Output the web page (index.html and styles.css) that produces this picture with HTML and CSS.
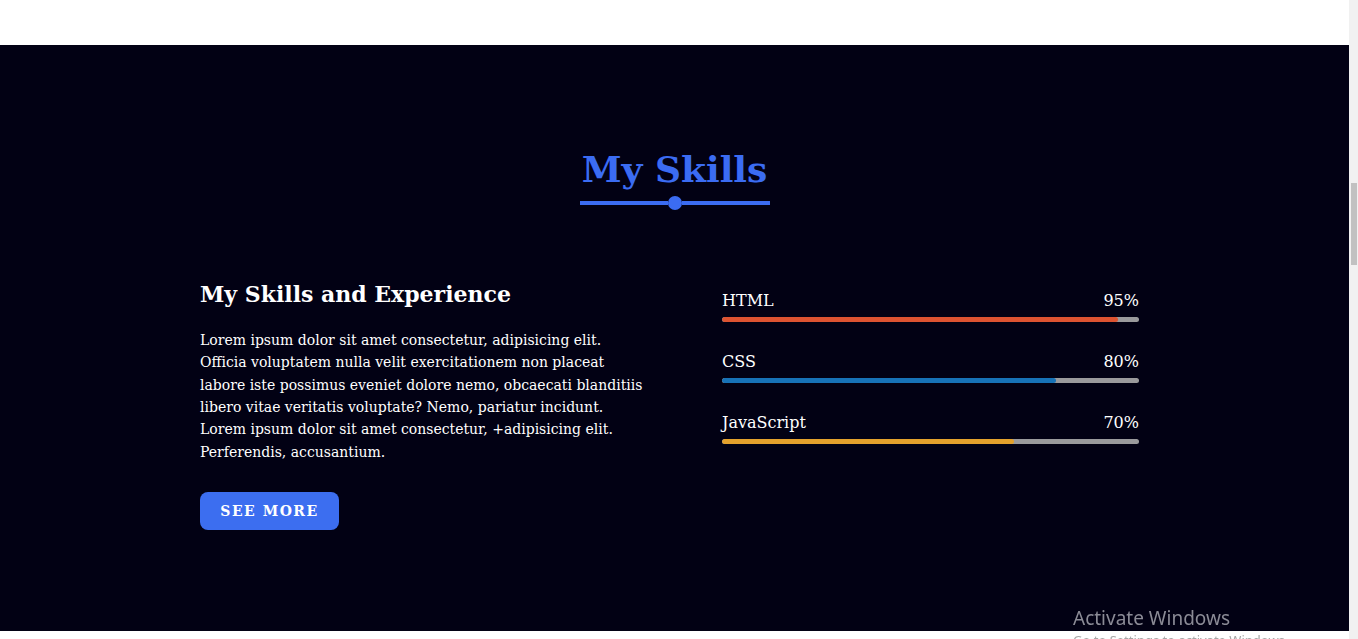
FILE: index.html
```html
<!DOCTYPE html>
<html lang="en">
<head>
<meta charset="utf-8">
<title>My Skills</title>
<link rel="stylesheet" href="styles.css">
</head>
<body>
<div class="window">
  <div class="page">
    <header class="topbar"></header>
    <section class="skills">
      <h2 class="section-title">My Skills</h2>
      <div class="divider"><span class="divider-line"></span><span class="divider-dot"></span><span class="divider-line"></span></div>
      <div class="skills-row">
        <div class="skills-text">
          <h3 class="skills-heading">My Skills and Experience</h3>
          <p class="skills-para">Lorem ipsum dolor sit amet consectetur, adipisicing elit. Officia voluptatem nulla velit exercitationem non placeat labore iste possimus eveniet dolore nemo, obcaecati blanditiis libero vitae veritatis voluptate? Nemo, pariatur incidunt. Lorem ipsum dolor sit amet consectetur, +adipisicing elit. Perferendis, accusantium.</p>
          <a class="btn" href="#">See More</a>
        </div>
        <div class="skills-bars">
          <div class="skill">
            <div class="skill-head"><span>HTML</span><span>95%</span></div>
            <div class="bar"><div class="bar-fill fill-html" style="width:95%"></div></div>
          </div>
          <div class="skill">
            <div class="skill-head"><span>CSS</span><span>80%</span></div>
            <div class="bar"><div class="bar-fill fill-css" style="width:80%"></div></div>
          </div>
          <div class="skill">
            <div class="skill-head"><span>JavaScript</span><span>70%</span></div>
            <div class="bar"><div class="bar-fill fill-js" style="width:70%"></div></div>
          </div>
        </div>
      </div>
    </section>
    <section class="next"></section>
  </div>
  <div class="scrollbar"><div class="scroll-thumb"></div></div>
</div>
<div class="watermark">
  <div class="wm-title">Activate Windows</div>
  <div class="wm-sub">Go to Settings to activate Windows.</div>
</div>
</body>
</html>
```

FILE: styles.css
```css
* { box-sizing: border-box; }
html, body {
  margin: 0;
  padding: 0;
  height: 639px;
  overflow: hidden;
  background: #fff;
}
body {
  font-family: "DejaVu Serif", "Liberation Serif", serif;
  color: #fff;
}
.window {
  display: flex;
  height: 639px;
}
.page {
  flex: 1;
  min-width: 0;
  background: #fff;
}
.topbar {
  height: 45px;
  background: #fff;
}
.skills {
  height: 586px;
  background: #020114;
  padding-top: 103px;
}
.section-title {
  margin: 0;
  text-align: center;
  font-size: 36px;
  line-height: 43.2px;
  font-weight: bold;
  color: #3b6cf2;
}
.divider {
  display: flex;
  align-items: center;
  justify-content: center;
  height: 14px;
  margin-top: 5px;
}
.divider-line {
  width: 88px;
  height: 4px;
  background: #3b6cf2;
}
.divider-dot {
  width: 14px;
  height: 14px;
  border-radius: 50%;
  background: #3b6cf2;
}
.skills-row {
  width: 949px;
  margin: 71px auto 0;
  display: grid;
  grid-template-columns: 448px 417px;
  column-gap: 74px;
  align-items: start;
}
.skills-heading {
  margin: 0;
  font-size: 22px;
  line-height: 27.6px;
  font-weight: bold;
}
.skills-para {
  margin: 20px 0 0;
  font-size: 14px;
  line-height: 22.4px;
}
.btn {
  margin-top: 29px;
  display: inline-flex;
  align-items: center;
  justify-content: center;
  width: 139px;
  height: 38px;
  border-radius: 8px;
  background: #3c6ef0;
  color: #fff;
  text-decoration: none;
  text-transform: uppercase;
  font-weight: bold;
  font-size: 14px;
  letter-spacing: 1.5px;
}
.skills-bars {
  padding-top: 10px;
  display: flex;
  flex-direction: column;
  gap: 30px;
}
.skill-head {
  display: flex;
  justify-content: space-between;
  font-size: 16px;
  line-height: 20px;
}
.bar {
  margin-top: 6px;
  height: 5px;
  border-radius: 3px;
  background: #9a9a9c;
  overflow: hidden;
}
.bar-fill {
  height: 100%;
  border-radius: 3px;
}
.fill-html { background: #dd5331; }
.fill-css { background: #1772b7; }
.fill-js { background: #e3a12c; }
.next {
  height: 8px;
  background: #fff;
}
.scrollbar {
  width: 9px;
  background: #f1f1f1;
  padding: 183px 1px 0 2px;
}
.scroll-thumb {
  height: 82px;
  background: #c1c1c1;
}
.watermark {
  position: fixed;
  left: 1073px;
  top: 605px;
  font-family: "Noto Sans", "Open Sans", sans-serif;
  pointer-events: none;
}
.wm-title {
  font-size: 19px;
  line-height: 26px;
  color: #8b8b96;
}
.wm-sub {
  font-size: 13px;
  line-height: 18px;
  color: #a6a6a6;
}
```
